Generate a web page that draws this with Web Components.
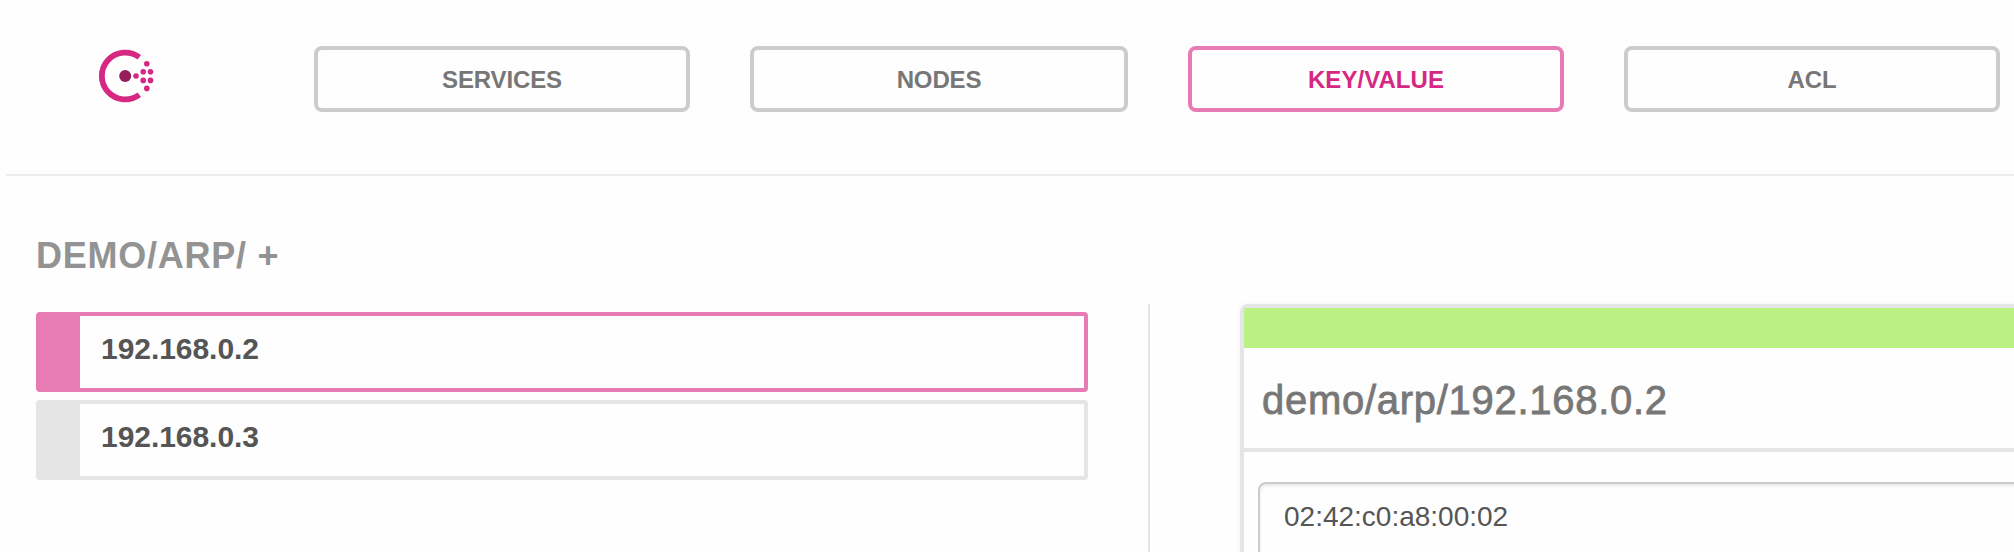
<!DOCTYPE html>
<html lang="en">
<head>
<meta charset="utf-8">
<title>Consul</title>
<style>
html,body{margin:0;height:100%;overflow:hidden;background:#fefefe}
body{font-family:"Liberation Sans",Arial,sans-serif}
</style>
</head>
<body>
<consul-app></consul-app>
<script>
const define = (name, html) => customElements.define(name, class extends HTMLElement {
  constructor() {
    super();
    const t = document.createElement('template');
    t.innerHTML = html;
    this.attachShadow({mode: 'open'}).append(t.content.cloneNode(true));
  }
});

define('consul-logo', `
<style>:host{display:block;width:56px;height:56px}svg{display:block}</style>
<svg width="56" height="56" viewBox="0 0 56 56">
  <path d="M41.3 9.3A23.4 23.4 0 1 0 41.3 46.7" fill="none" stroke="#d62783" stroke-width="5.8"/>
  <circle cx="27.2" cy="28" r="6" fill="#961d59"/>
  <g fill="#d62783"><circle cx="38" cy="28" r="2.8"/><circle cx="45.2" cy="23.7" r="2.8"/><circle cx="52.5" cy="23.7" r="2.8"/><circle cx="45.2" cy="32.4" r="2.8"/><circle cx="52.5" cy="32.4" r="2.8"/><circle cx="48.8" cy="15.8" r="2.8"/><circle cx="48.8" cy="40.4" r="2.8"/></g>
</svg>`);

define('nav-button', `
<style>
:host{display:block;box-sizing:border-box;flex:none;width:376px;height:66px;border:4px solid #ccc;border-radius:8px;color:#777;font-weight:700;font-size:24px;line-height:60px;letter-spacing:-.12px;text-align:center}
:host([wide]){width:378px}
:host([active]){border-color:#e77bb3;color:#d62783;letter-spacing:.05px}
</style><slot></slot>`);

define('nav-bar', `
<style>
:host{display:flex;box-sizing:border-box;height:176px;margin-left:6px;border-bottom:2px solid #ededed;padding:46px 0 0 92px;align-items:flex-start}
consul-logo{margin:2px 160px 0 0;flex:none}
nav{display:flex;gap:60px}
</style>
<consul-logo></consul-logo><nav><slot></slot></nav>`);

define('key-item', `
<style>
:host{--c:#e5e5e5;display:flex;box-sizing:border-box;height:80px;border:4px solid var(--c);border-radius:4px;color:#555;font-size:30px;font-weight:700}
:host([active]){--c:#e77bb3}
i{width:40px;background:var(--c)}
span{padding-left:21px;line-height:66px;letter-spacing:-.05px}
</style><i></i><span><slot></slot></span>`);

define('key-list', `
<style>
:host{display:block;width:1052px;flex:none}
h4{margin:0 0 36px;padding-top:59px;height:41px;line-height:41px;font-size:36px;color:#939393;font-weight:700;letter-spacing:.74px}
div{display:grid;gap:8px}
</style><h4><slot name="title"></slot></h4><div><slot></slot></div>`);

define('key-panel', `
<style>
:host{display:block;box-sizing:border-box;flex:none;width:900px;height:600px;border:4px solid #e5e5e5;border-radius:8px 0 0 0;box-shadow:0 0 4px rgba(0,0,0,.06)}
.bar{height:40px;background:#bbf085}
.head{height:100px;border-bottom:4px solid #e5e5e5;padding-left:18px;font-size:40px;line-height:104px;color:#777;-webkit-text-stroke:.8px #777;letter-spacing:.72px}
.field{box-sizing:border-box;margin:30px 0 0 14px;height:240px;border:2px solid #ccc;border-radius:8px;box-shadow:inset 0 2px 3px rgba(0,0,0,.09);padding:13px 24px;font-size:28px;line-height:40px;color:#555}
</style>
<div class="bar"></div><div class="head"><slot name="title"></slot></div><div class="field"><slot></slot></div>`);

define('consul-app', `
<style>
:host{display:block;width:2014px;height:552px;overflow:hidden}
main{display:flex;padding-left:36px;align-items:flex-start}
hr{margin:128px 90px 0 60px;border:0;width:2px;height:300px;background:#e5e5e5;flex:none}
key-panel{margin-top:128px}
</style>
<nav-bar><nav-button>SERVICES</nav-button><nav-button wide>NODES</nav-button><nav-button active>KEY/VALUE</nav-button><nav-button>ACL</nav-button></nav-bar>
<main>
<key-list><span slot="title">DEMO/ARP/ +</span><key-item active>192.168.0.2</key-item><key-item>192.168.0.3</key-item></key-list>
<hr>
<key-panel><span slot="title">demo/arp/192.168.0.2</span>02:42:c0:a8:00:02</key-panel>
</main>`);
</script>
</body>
</html>
